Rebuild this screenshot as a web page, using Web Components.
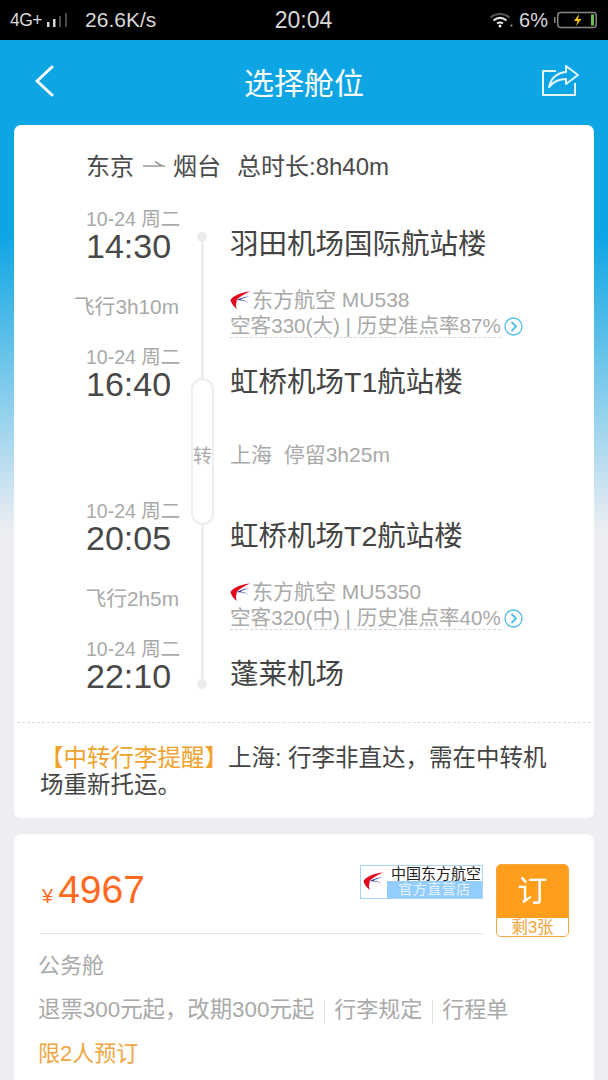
<!DOCTYPE html>
<html>
<head>
<meta charset="utf-8">
<style>
  html, body { margin: 0; height: 100%; }
  body {
    width: 608px;
    height: 1080px;
    overflow: hidden;
    background: linear-gradient(#0ea5e4 0, #0ea5e4 235px, #eceef3 530px);
    font-family: "Liberation Sans", "Noto Sans CJK SC", sans-serif;
    display: flex;
    flex-direction: column;
  }
</style>
</head>
<body>
<status-bar></status-bar>
<title-bar>选择舱位</title-bar>
<route-card>
  <route-stop date="10-24 周二" time="14:30" name="羽田机场国际航站楼" kind="start"></route-stop>
  <route-leg duration="飞行3h10m" flight="东方航空 MU538" plane="空客330(大) | 历史准点率87%"></route-leg>
  <route-stop date="10-24 周二" time="16:40" name="虹桥机场T1航站楼"></route-stop>
  <route-transfer>上海&nbsp;&nbsp;停留3h25m</route-transfer>
  <route-stop date="10-24 周二" time="20:05" name="虹桥机场T2航站楼"></route-stop>
  <route-leg duration="飞行2h5m" flight="东方航空 MU5350" plane="空客320(中) | 历史准点率40%"></route-leg>
  <route-stop date="10-24 周二" time="22:10" name="蓬莱机场" kind="end"></route-stop>
</route-card>
<fare-card></fare-card>

<script>
const WING = `<path d="M20 1.500C12 2 3.500 5.500 .5 10c.5 3 3 6.500 6.500 9-1.500-3-1.500-5.500 0-7.500-1-.5-1-1 0-2C10 6.500 15 3.500 20 1.500z" fill="#e3061c"/>
  <path d="M20 6.500C14 6.500 9.500 8.500 6 10.500c4-.5 9.500-.5 13 3-3-3-5.500-3.500-8.500-4C13 8 16 7.200 20 6.500z" fill="#2a3a97"/>`;

class StatusBar extends HTMLElement {
  connectedCallback() {
    this.attachShadow({ mode: 'open' });
    this.shadowRoot.innerHTML = `
      <style>
        :host {
          display: grid;
          grid-template-columns: 1fr auto 1fr;
          align-items: center;
          height: 40px;
          flex: none;
          background: #000;
          color: #d8d8d8;
          padding: 0 11px 0 10px;
          box-sizing: border-box;
        }
        .left, .right { display: flex; align-items: center; }
        .right { justify-content: flex-end; }
        .net { font-size: 17.500px; letter-spacing: -.5px; }
        .speed { font-size: 21px; margin-left: 15px; }
        .time { font-size: 23px; }
        .pct { font-size: 20px; margin: 0 5px 0 6px; }
      </style>
      <div class="left">
        <span class="net">4G+</span>
        <svg width="24" height="18" style="margin-left:4px"><path d="M1 11h2.500v5H1zM7 8h2.500v8H7z" fill="#d8d8d8"/><path d="M13 5h2v11h-2zM19 2h2v14h-2z" fill="#4a4a4a"/></svg>
        <span class="speed">26.6K/s</span>
      </div>
      <span class="time">20:04</span>
      <div class="right">
        <svg width="24" height="16" viewBox="0 0 24 16" fill="none" stroke="#e8e8e8" stroke-width="2">
          <path d="M1.500 5.500C7 .8 15 .8 20.500 5.500" stroke="#555"/>
          <path d="M4.500 8.500c4-3.200 9-3.200 13 0M8 11.500c2-1.400 4-1.400 6 0"/>
          <circle cx="11" cy="14" r="1.500" fill="#e8e8e8" stroke="none"/>
          <circle cx="22.500" cy="13.500" r="1" fill="#aaa" stroke="none"/>
        </svg>
        <span class="pct">6%</span>
        <svg width="44" height="18" viewBox="0 0 44 18">
          <rect x="4.700" y="1.500" width="38.500" height="15" rx="3" fill="none" stroke="#888" stroke-width="1.500"/>
          <rect x="1" y="6" width="1.500" height="6" fill="#888"/>
          <rect x="38" y="3.500" width="3" height="11" fill="#6fc04a"/>
          <path d="M26 3l-5 7h3.500l-1.500 5 5.500-7H25z" fill="#f6c40e"/>
        </svg>
      </div>`;
  }
}
customElements.define('status-bar', StatusBar);

class TitleBar extends HTMLElement {
  connectedCallback() {
    this.attachShadow({ mode: 'open' });
    this.shadowRoot.innerHTML = `
      <style>
        :host {
          display: grid;
          grid-template-columns: 1fr auto 1fr;
          align-items: center;
          height: 85px;
          flex: none;
          padding: 0 34px 3px 34px;
          box-sizing: border-box;
          color: #fff;
        }
        .title { font-size: 30px; }
        .share { justify-self: end; margin-right: -6px; }
      </style>
      <svg width="20" height="32" viewBox="0 0 20 32" fill="none" stroke="#fff" stroke-width="3" stroke-linecap="round" stroke-linejoin="round"><path d="M18 2L3 16l15 14"/></svg>
      <span class="title"><slot></slot></span>
      <svg class="share" width="40" height="34" viewBox="0 0 40 34" fill="none" stroke="#e4f5fd" stroke-width="2" stroke-linejoin="round">
        <path d="M16 7H3v24h32V19"/>
        <path d="M26 2l12 9-12 9v-5c-7 0-12 2-17 8 2-9 8-14 17-15z"/>
      </svg>`;
  }
}
customElements.define('title-bar', TitleBar);

class RouteCard extends HTMLElement {
  connectedCallback() {
    this.attachShadow({ mode: 'open' });
    this.shadowRoot.innerHTML = `
      <style>
        :host {
          display: block;
          flex: none;
          margin: 0 14px;
          height: 693px;
          background: #fff;
          border-radius: 7px;
          box-sizing: border-box;
          color: #444;
        }
        .head {
          display: flex;
          align-items: center;
          height: 84px;
          padding: 0 0 5px 72px;
          box-sizing: border-box;
          font-size: 24px;
          color: #4a4a4a;
          white-space: nowrap;
        }
        .arrow { margin: 0 8px 0 9px; }
        .total { margin-left: 16px; }
        .stops { position: relative; height: 513px; }
        .note {
          margin: 0 3px;
          border-top: 1px dashed #dcdcdc;
          padding: 22px 31px 0 23px;
          font-size: 23.500px;
          line-height: 27px;
          color: #444;
        }
        .note b { font-weight: normal; color: #f0a22e; }
      </style>
      <div class="head">
        <span>东京</span>
        <svg class="arrow" width="22" height="10" viewBox="0 0 22 10" fill="none" stroke="#999" stroke-width="1.500"><path d="M0 6h22M12 1.500l7 4.500"/></svg>
        <span>烟台</span>
        <span class="total">总时长:8h40m</span>
      </div>
      <div class="stops"><slot></slot></div>
      <div class="note"><b>【中转行李提醒】</b>上海: 行李非直达，需在中转机场重新托运。</div>`;
  }
}
customElements.define('route-card', RouteCard);

class RouteStop extends HTMLElement {
  connectedCallback() {
    const kind = this.getAttribute('kind');
    this.attachShadow({ mode: 'open' });
    this.shadowRoot.innerHTML = `
      <style>
        :host {
          display: grid;
          grid-template-columns: 158px 58px 1fr;
          height: 56px;
          align-items: center;
        }
        .when { padding-left: 72px; white-space: nowrap; }
        .date { font-size: 19.500px; line-height: 19px; color: #a9a9a9; }
        .time { font-size: 34px; line-height: 35px; color: #484848; }
        .rail { align-self: stretch; position: relative; }
        .rail i { position: absolute; left: 28.500px; width: 3px; background: #eeeeee; top: 0; bottom: 0; }
        :host([kind=start]) .rail i { top: 28px; }
        :host([kind=end]) .rail i { bottom: 11px; }
        .dot { position: absolute; left: 25px; top: 23px; width: 10px; height: 10px; border-radius: 50%; background: #ececec; }
        :host([kind=end]) .dot { top: 40px; }
        .name { font-size: 28.500px; color: #444; white-space: nowrap; margin-top: 8px; }
      </style>
      <div class="when">
        <div class="date">${this.getAttribute('date')}</div>
        <div class="time">${this.getAttribute('time')}</div>
      </div>
      <div class="rail"><i></i>${kind ? '<span class="dot"></span>' : ''}</div>
      <div class="name">${this.getAttribute('name')}</div>`;
  }
}
customElements.define('route-stop', RouteStop);

class RouteLeg extends HTMLElement {
  connectedCallback() {
    this.attachShadow({ mode: 'open' });
    this.shadowRoot.innerHTML = `
      <style>
        :host {
          display: grid;
          grid-template-columns: 165px 51px 1fr;
          height: 82px;
          align-items: center;
          color: #a9a9a9;
        }
        .dur { text-align: right; white-space: nowrap; font-size: 20.800px; margin-top: -2px; }
        .rail { align-self: stretch; position: relative; }
        .rail i { position: absolute; left: 21.500px; width: 3px; top: 0; bottom: 0; background: #eeeeee; }
        .info { line-height: 26px; white-space: nowrap; margin-top: 13px; }
        .line { display: flex; align-items: center; font-size: 21px; }
        .plane {
          border-bottom: 1px dashed #d5d5d5;
          width: 271px;
          line-height: 22px;
          margin-top: 2px;
          font-size: 20.600px;
        }
        .more { position: absolute; margin-left: 274px; }
      </style>
      <div class="dur">${this.getAttribute('duration')}</div>
      <div class="rail"><i></i></div>
      <div class="info">
        <div class="line"><svg width="22" height="20" viewBox="0 0 22 20">${WING}</svg><span>${this.getAttribute('flight')}</span></div>
        <div class="line plane"><span>${this.getAttribute('plane')}</span>
          <svg class="more" width="19" height="19" viewBox="0 0 19 19" fill="none" stroke="#4dbdec"><circle cx="9.500" cy="9.500" r="8.500" stroke-width="1.300"/><path d="M7.500 5l4.500 4.500L7.500 14" stroke-width="1.800"/></svg>
        </div>
      </div>`;
  }
}
customElements.define('route-leg', RouteLeg);

class RouteTransfer extends HTMLElement {
  connectedCallback() {
    this.attachShadow({ mode: 'open' });
    this.shadowRoot.innerHTML = `
      <style>
        :host {
          display: block;
          height: 98px;
          position: relative;
          color: #a9a9a9;
          font-size: 21px;
        }
        .pill {
          position: absolute;
          left: 177px;
          top: -25px;
          width: 23px;
          height: 147px;
          box-sizing: border-box;
          border: 2px solid #eeeeee;
          border-radius: 12px;
          background: #fff;
          display: flex;
          align-items: center;
          justify-content: center;
          padding-top: 5px;
          color: #a9a9a9;
          font-size: 19px;
          z-index: 1;
        }
        .text { position: absolute; left: 216px; top: 3px; line-height: 98px; white-space: nowrap; }
      </style>
      <div class="pill">转</div>
      <div class="text"><slot></slot></div>`;
  }
}
customElements.define('route-transfer', RouteTransfer);

class FareCard extends HTMLElement {
  connectedCallback() {
    this.attachShadow({ mode: 'open' });
    this.shadowRoot.innerHTML = `
      <style>
        :host {
          display: block;
          flex: none;
          margin: 16px 14px 0;
          height: 300px;
          background: #fff;
          border-radius: 7px;
          padding: 30px 26px 0;
          box-sizing: border-box;
          position: relative;
        }
        .top {
          display: flex;
          justify-content: space-between;
          align-items: flex-start;
          height: 69px;
          width: 443px;
          border-bottom: 1px solid #e4e4e4;
        }
        .price { color: #ff6a22; font-size: 39px; line-height: 50px; white-space: nowrap; margin-top: 1px; }
        .price small { font-size: 20px; margin: 0 5px 0 2px; }
        .shop {
          width: 121px;
          height: 32px;
          margin-top: 1px;
          border: 1px solid #a8d4fa;
          display: grid;
          grid-template-columns: 26px 1fr;
          grid-template-rows: 15px 1fr;
          text-align: center;
          line-height: 15px;
          white-space: nowrap;
        }
        .shop svg { grid-row: span 2; margin: 5px 0 0 2px; }
        .shop span { color: #222; font-size: 15px; padding-left: 3px; }
        .shop em { font-style: normal; background: #93cdfd; color: #e4f2fe; font-size: 14px; line-height: 17px; letter-spacing: .5px; }
        .book {
          position: absolute;
          left: 482px;
          top: 30px;
          width: 73px;
          height: 73px;
          border-radius: 5px;
          background: #ff9d1c;
          border: 1.500px solid #f5a742;
          box-sizing: border-box;
          display: flex;
          flex-direction: column;
          overflow: hidden;
          text-align: center;
          color: #fff;
        }
        .book b { flex: 1; font-weight: normal; font-size: 30px; line-height: 51px; }
        .book span { background: #fff; color: #f3a33a; font-size: 16.500px; line-height: 18px; }
        .rows { color: #a9a9a9; font-size: 22px; margin-left: -2px; }
        .cabin { margin-top: 18px; line-height: 28px; }
        .rules { margin-top: 16px; line-height: 28px; display: flex; white-space: nowrap; }
        .rules span:first-child { font-size: 22.400px; }
        .rules span + span { border-left: 1px solid #e2e2e2; margin-left: 10px; padding-left: 9px; line-height: 20px; margin-top: 4px; }
        .limit { color: #f0a540; margin-top: 16px; line-height: 28px; }
      </style>
      <div class="top">
        <div class="price"><small>¥</small>4967</div>
        <div class="shop">
          <svg width="22" height="20" viewBox="0 0 22 20">${WING}</svg>
          <span>中国东方航空</span>
          <em>官方直营店</em>
        </div>
      </div>
      <div class="book"><b>订</b><span>剩3张</span></div>
      <div class="rows">
        <div class="cabin">公务舱</div>
        <div class="rules"><span>退票300元起，改期300元起</span><span>行李规定</span><span>行程单</span></div>
        <div class="limit">限2人预订</div>
      </div>`;
  }
}
customElements.define('fare-card', FareCard);
</script>
</body>
</html>
